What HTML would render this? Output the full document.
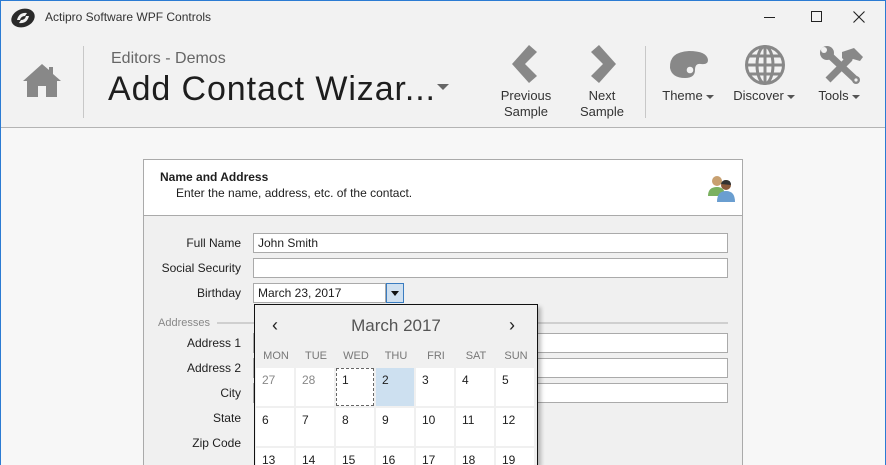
<!DOCTYPE html>
<html><head><meta charset="utf-8"><style>
*{margin:0;padding:0;box-sizing:border-box}
html,body{width:886px;height:465px;overflow:hidden}
body{background:#f7f7f7;font-family:"Liberation Sans",sans-serif;position:relative;color:#1e1e1e}
.a{position:absolute}
.win{left:0;top:0;width:886px;height:465px;border:1px solid #2b7bd3;border-bottom:none}
.rib{left:1px;top:1px;width:884px;height:127px;background:#f2f2f2;border-bottom:1px solid #b4b4b4}
.lbl{font-size:13px;color:#333;text-align:center;line-height:16px}
.tri{display:inline-block;width:0;height:0;border-left:4px solid transparent;border-right:4px solid transparent;border-top:4px solid #555;vertical-align:middle;margin-left:3px}
.panel{left:143px;top:159px;width:600px;height:306px;border:1px solid #aaa;border-bottom:none;background:#f0f0f0}
.hdr{left:0;top:0;width:598px;height:56px;background:#fff;border-bottom:1px solid #aaa}
.fl{font-size:12px;text-align:right;width:98px;left:143px;color:#1e1e1e}
.in{left:253px;width:475px;height:20px;background:#fff;border:1px solid #aaa;font-size:12px;padding:3px 4px;line-height:13px}
.cal{left:254px;top:304px;width:284px;height:161px;background:#f0f0f0;border:1px solid #111;border-bottom:none;box-shadow:3px 3px 4px rgba(0,0,0,.25);overflow:hidden}
.c{width:38px;height:38px;background:#fff;font-size:12px;padding:5px 0 0 6px;position:absolute}
.dw{position:absolute;top:45px;width:40px;text-align:center;font-size:11px;color:#777}
</style></head><body>
<div class="a rib"></div>
<div class="a win"></div>
<svg class="a" style="left:9px;top:7px" width="28" height="22" viewBox="0 0 28 22"><ellipse cx="14" cy="11" rx="12" ry="9" fill="#2a2a2a" transform="rotate(-20 14 11)"/><path d="M8 13 Q10 5 18 6 L16 9 Q12 9 11 13Z M20 9 Q18 17 10 16 L12 13 Q16 13 17 9Z" fill="#f2f2f2"/></svg>
<div class="a" style="left:45px;top:10px;font-size:12px;color:#333">Actipro Software WPF Controls</div>
<div class="a" style="left:764px;top:17px;width:11px;height:1px;background:#222"></div>
<div class="a" style="left:811px;top:11px;width:11px;height:11px;border:1px solid #222"></div>
<svg class="a" style="left:853px;top:11px" width="12" height="12"><path d="M0.5 0.5L11.5 11.5M11.5 0.5L0.5 11.5" stroke="#222" stroke-width="1.1"/></svg>
<svg class="a" style="left:22px;top:62px" width="40" height="36" viewBox="0 0 40 36"><path d="M1 19 L20 2 L27 8 L27 5 L31 5 L31 12 L39 19 L35 19 L35 35 L24 35 L24 24 L16 24 L16 35 L5 35 L5 19Z" fill="#888"/></svg>
<div class="a" style="left:83px;top:46px;width:1px;height:72px;background:#c8c8c8"></div>
<div class="a" style="left:111px;top:50px;font-size:16px;color:#666">Editors - Demos</div>
<div class="a" style="left:108px;top:70px;font-size:34px;color:#1e1e1e;letter-spacing:0.9px">Add Contact Wizar...</div>
<div class="a" style="left:437px;top:84px;border-left:6px solid transparent;border-right:6px solid transparent;border-top:6px solid #666"></div>
<svg class="a" style="left:510px;top:44px" width="30" height="40"><path d="M19 1 L27 8 L15 20 L27 32 L19 39 L2 20Z" fill="#888"/></svg>
<svg class="a" style="left:588px;top:44px" width="30" height="40"><path d="M11 1 L3 8 L15 20 L3 32 L11 39 L28 20Z" fill="#888"/></svg>
<div class="a lbl" style="left:486px;top:88px;width:80px">Previous<br>Sample</div>
<div class="a lbl" style="left:572px;top:88px;width:60px">Next<br>Sample</div>
<div class="a" style="left:645px;top:46px;width:1px;height:72px;background:#c8c8c8"></div>
<svg class="a" style="left:667px;top:48px" width="44" height="34" viewBox="0 0 44 34"><path d="M3 20 Q2 4 22 3 Q40 3 41 12 Q41 17 34 16 Q28 15 28 22 Q28 30 18 30 Q5 30 3 20Z" fill="#888"/><circle cx="23" cy="22" r="3.3" fill="#f2f2f2"/></svg>
<svg class="a" style="left:744px;top:44px" width="42" height="42" viewBox="0 0 42 42" fill="none" stroke="#888" stroke-width="3"><circle cx="21" cy="21" r="18.5"/><ellipse cx="21" cy="21" rx="8" ry="18.5"/><path d="M21 3V39M3 21H39M6 12H36M6 30H36"/></svg>
<svg class="a" style="left:820px;top:46px" width="44" height="38" viewBox="0 0 44 38"><path d="M6 6 L36 34" stroke="#888" stroke-width="7"/><circle cx="7" cy="7" r="7" fill="#888"/><circle cx="4" cy="4" r="3" fill="#f2f2f2"/><circle cx="36" cy="34" r="4" fill="#888"/><circle cx="36" cy="34" r="1.6" fill="#f2f2f2"/><path d="M8 34 L30 12" stroke="#888" stroke-width="7"/><path d="M22 6 L34 2 L43 11 L40 15 L33 13 L28 18 L22 12Z" fill="#888"/></svg>
<div class="a lbl" style="left:650px;top:88px;width:76px">Theme<span class="tri"></span></div>
<div class="a lbl" style="left:728px;top:88px;width:72px">Discover<span class="tri"></span></div>
<div class="a lbl" style="left:808px;top:88px;width:62px">Tools<span class="tri"></span></div>

<div class="a panel"><div class="a hdr">
<div class="a" style="left:16px;top:10px;font-size:12px;font-weight:bold">Name and Address</div>
<div class="a" style="left:32px;top:26px;font-size:12px">Enter the name, address, etc. of the contact.</div>
<svg class="a" style="left:563px;top:12px" width="32" height="32" viewBox="0 0 32 32"><circle cx="10" cy="9" r="5" fill="#c8a070"/><path d="M1 24 Q1 15 10 15 Q18 15 18 24Z" fill="#7ab060"/><circle cx="19" cy="13" r="5" fill="#8a5a3a"/><path d="M19 8 Q24 8 24 13 L14 12 Q15 8 19 8Z" fill="#333"/><path d="M10 30 Q10 19 19 19 Q28 19 28 30Z" fill="#6a9ed0"/></svg>
</div></div>
<div class="a fl" style="top:236px">Full Name</div>
<div class="a fl" style="top:261px">Social Security</div>
<div class="a fl" style="top:286px">Birthday</div>
<div class="a in" style="top:233px">John Smith</div>
<div class="a in" style="top:258px"></div>
<div class="a in" style="top:283px;width:133px">March 23, 2017</div>
<div class="a" style="left:386px;top:283px;width:18px;height:20px;background:#cfe0f0;border:1px solid #3a7cc0"><div style="margin:7px 0 0 4px;border-left:4px solid transparent;border-right:4px solid transparent;border-top:5px solid #111;width:0"></div></div>
<div class="a" style="left:158px;top:317px;font-size:11px;color:#888">Addresses</div>
<div class="a" style="left:217px;top:322px;width:511px;height:2px;background:#cfcfcf"></div>
<div class="a fl" style="top:336px">Address 1</div>
<div class="a fl" style="top:361px">Address 2</div>
<div class="a fl" style="top:386px">City</div>
<div class="a fl" style="top:411px">State</div>
<div class="a fl" style="top:436px">Zip Code</div>
<div class="a in" style="top:333px"></div>
<div class="a in" style="top:358px"></div>
<div class="a in" style="top:383px"></div>

<div class="a cal">
<div class="a" style="left:17px;top:10px;font-size:18px;color:#222">&#8249;</div>
<div class="a" style="left:0;top:11px;width:282px;text-align:center;font-size:17px;color:#555">March 2017</div>
<div class="a" style="left:254px;top:10px;font-size:18px;color:#222">&#8250;</div>
<div class="dw" style="left:1px">MON</div><div class="dw" style="left:41px">TUE</div><div class="dw" style="left:81px">WED</div><div class="dw" style="left:121px">THU</div><div class="dw" style="left:161px">FRI</div><div class="dw" style="left:201px">SAT</div><div class="dw" style="left:241px">SUN</div>
<div class="c" style="left:1px;top:63px;color:#888">27</div><div class="c" style="left:41px;top:63px;color:#888">28</div><div class="c" style="left:81px;top:63px;border:1px dashed #666;padding:4px 0 0 5px">1</div><div class="c" style="left:121px;top:63px;background:#cde0f0">2</div><div class="c" style="left:161px;top:63px">3</div><div class="c" style="left:201px;top:63px">4</div><div class="c" style="left:241px;top:63px">5</div>
<div class="c" style="left:1px;top:103px">6</div><div class="c" style="left:41px;top:103px">7</div><div class="c" style="left:81px;top:103px">8</div><div class="c" style="left:121px;top:103px">9</div><div class="c" style="left:161px;top:103px">10</div><div class="c" style="left:201px;top:103px">11</div><div class="c" style="left:241px;top:103px">12</div>
<div class="c" style="left:1px;top:143px">13</div><div class="c" style="left:41px;top:143px">14</div><div class="c" style="left:81px;top:143px">15</div><div class="c" style="left:121px;top:143px">16</div><div class="c" style="left:161px;top:143px">17</div><div class="c" style="left:201px;top:143px">18</div><div class="c" style="left:241px;top:143px">19</div>
</div>
</body></html>
